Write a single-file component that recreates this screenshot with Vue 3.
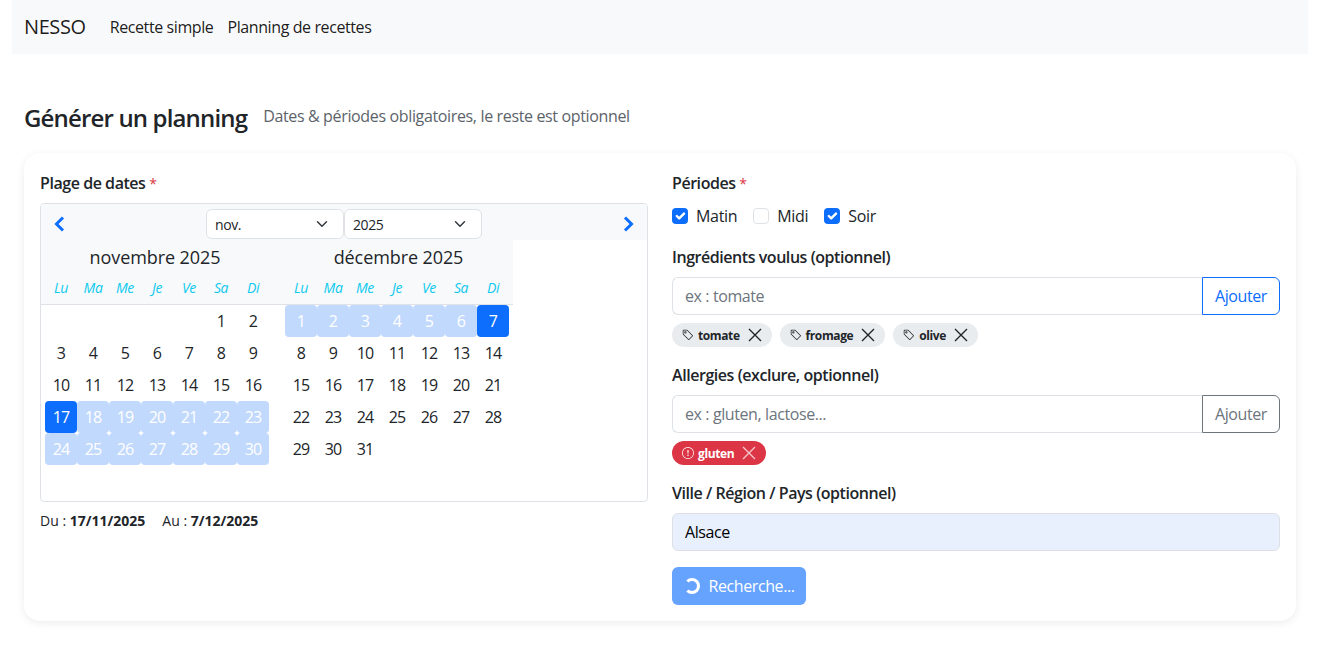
<script setup>
const weekDays = ['Lu', 'Ma', 'Me', 'Je', 'Ve', 'Sa', 'Di']

const range = (a, b) => Array.from({ length: b - a + 1 }, (_, i) => a + i)

// nov 2025 starts on a saturday, dec 2025 on a monday
const months = [
  { title: 'novembre 2025', blanks: 5, days: range(1, 30), start: 17, end: 31 },
  { title: 'décembre 2025', blanks: 0, days: range(1, 31), start: 0, end: 7 },
]

const dayClass = (m, d) => {
  if (d === m.start || d === m.end) return 'day picked'
  if (d > m.start && d < m.end) return 'day between'
  return 'day'
}

const tags = ['tomate', 'fromage', 'olive']
</script>

<template>
  <div class="page">
    <nav class="navbar">
      <span class="brand">NESSO</span>
      <a class="nav-link">Recette simple</a>
      <a class="nav-link">Planning de recettes</a>
    </nav>

    <div class="content">
      <div class="heading">
        <h1>Générer un planning</h1>
        <span class="sub">Dates &amp; périodes obligatoires, le reste est optionnel</span>
      </div>

      <div class="card">
        <div class="col">
          <div class="label">Plage de dates <span class="req">*</span></div>
          <div class="calendar">
            <div class="cal-top">
              <svg class="arrow" width="16" height="16" viewBox="0 0 16 16"><path d="M11 1.5 4.5 8l6.5 6.5" fill="none" stroke="#0d6efd" stroke-width="3"/></svg>
              <div class="selects">
                <div class="select">nov.<svg width="12" height="12" viewBox="0 0 16 16"><path d="m2 5 6 6 6-6" fill="none" stroke="#343a40" stroke-width="2" stroke-linecap="round" stroke-linejoin="round"/></svg></div>
                <div class="select">2025<svg width="12" height="12" viewBox="0 0 16 16"><path d="m2 5 6 6 6-6" fill="none" stroke="#343a40" stroke-width="2" stroke-linecap="round" stroke-linejoin="round"/></svg></div>
              </div>
              <svg class="arrow" width="16" height="16" viewBox="0 0 16 16"><path d="M5 1.5 11.5 8 5 14.5" fill="none" stroke="#0d6efd" stroke-width="3"/></svg>
            </div>
            <div class="months">
              <div v-for="m in months" :key="m.title" class="month">
                <div class="month-head">
                  <div class="month-title">{{ m.title }}</div>
                  <div class="grid week">
                    <span v-for="w in weekDays" :key="w">{{ w }}</span>
                  </div>
                </div>
                <div class="grid days">
                  <span v-for="b in m.blanks" :key="'b' + b"></span>
                  <span v-for="d in m.days" :key="d" :class="dayClass(m, d)">{{ d }}</span>
                </div>
              </div>
            </div>
          </div>
          <div class="picked-dates">
            <span>Du : <b>17/11/2025</b></span>
            <span>Au : <b>7/12/2025</b></span>
          </div>
        </div>

        <div class="col">
          <div class="label">Périodes <span class="req">*</span></div>
          <div class="checks">
            <label class="check">
              <span class="box on"><svg width="16" height="16" viewBox="0 0 20 20"><path d="m6 10 3 3 6-6" fill="none" stroke="#fff" stroke-width="3" stroke-linecap="round" stroke-linejoin="round"/></svg></span>Matin
            </label>
            <label class="check"><span class="box"></span>Midi</label>
            <label class="check">
              <span class="box on"><svg width="16" height="16" viewBox="0 0 20 20"><path d="m6 10 3 3 6-6" fill="none" stroke="#fff" stroke-width="3" stroke-linecap="round" stroke-linejoin="round"/></svg></span>Soir
            </label>
          </div>

          <div class="label">Ingrédients voulus (optionnel)</div>
          <div class="input-group">
            <input class="input" placeholder="ex : tomate" />
            <button class="add add-blue">Ajouter</button>
          </div>
          <div class="badges">
            <span v-for="t in tags" :key="t" class="badge">
              <svg width="12" height="12" viewBox="0 0 16 16" fill="#212529"><path d="M6 4.5a1.5 1.5 0 1 1-3 0 1.5 1.5 0 0 1 3 0m-1 0a.5.5 0 1 0-1 0 .5.5 0 0 0 1 0"/><path d="M2 1h4.586a1 1 0 0 1 .707.293l7 7a1 1 0 0 1 0 1.414l-4.586 4.586a1 1 0 0 1-1.414 0l-7-7A1 1 0 0 1 1 6.586V2a1 1 0 0 1 1-1m0 5.586 7 7L13.586 9l-7-7H2z"/></svg>
              <b>{{ t }}</b>
              <svg class="x" width="14" height="14" viewBox="0 0 14 14"><path d="m1 1 12 12M13 1 1 13" stroke="#212529" stroke-width="1.4" fill="none"/></svg>
            </span>
          </div>

          <div class="label">Allergies (exclure, optionnel)</div>
          <div class="input-group">
            <input class="input" placeholder="ex : gluten, lactose..." />
            <button class="add add-grey">Ajouter</button>
          </div>
          <div class="badges">
            <span class="badge badge-red">
              <svg width="12" height="12" viewBox="0 0 16 16" fill="#fff"><path d="M8 15A7 7 0 1 1 8 1a7 7 0 0 1 0 14m0 1A8 8 0 1 0 8 0a8 8 0 0 0 0 16"/><path d="M7.002 11a1 1 0 1 1 2 0 1 1 0 0 1-2 0M7.1 4.995a.905.905 0 1 1 1.8 0l-.35 3.507a.552.552 0 0 1-1.1 0z"/></svg>
              <b>gluten</b>
              <svg class="x" width="14" height="14" viewBox="0 0 14 14"><path d="m1 1 12 12M13 1 1 13" stroke="#f4c6cb" stroke-width="1.4" fill="none"/></svg>
            </span>
          </div>

          <div class="label">Ville / Région / Pays (optionnel)</div>
          <input class="input input-filled" value="Alsace" />

          <button class="search" disabled>
            <span class="spinner"></span>Recherche...
          </button>
        </div>
      </div>
    </div>
  </div>
</template>

<style>
body {
  background: #fff;
}
</style>

<style scoped>
.page {
  padding: 0 28px 0 12px;
  height: 657px;
  box-sizing: border-box;
  font-family: "Open Sans", "Noto Sans", sans-serif;
  font-size: 16px;
  letter-spacing: -0.025em;
  color: #212529;
  line-height: 1.5;
}
.navbar {
  height: 54px;
  background: #f8f9fa;
  padding: 0 12px;
  display: flex;
  align-items: center;
  color: rgba(0, 0, 0, 0.9);
}
.brand {
  font-size: 20px;
  margin-right: 24px;
}
.nav-link {
  margin-right: 14px;
  font-size: 16px;
}
.content {
  padding: 0 12px;
}
.heading {
  margin-top: 46px;
  height: 36px;
  display: flex;
  align-items: center;
  gap: 16px;
}
h1 {
  margin: 0;
  font-size: 24px;
  font-weight: 600;
  line-height: 36px;
  letter-spacing: -0.035em;
}
.sub {
  color: #5c636a;
  font-size: 16px;
  letter-spacing: -0.022em;
  padding-bottom: 4px;
}
.card {
  margin-top: 17px;
  height: 468px;
  box-sizing: border-box;
  padding: 18px 16px 16px;
  border-radius: 16px;
  background: #fff;
  box-shadow: 0 2px 8px rgba(0, 0, 0, 0.08);
  display: grid;
  grid-template-columns: 608px 608px;
  column-gap: 24px;
}
.col {
  display: flex;
  flex-direction: column;
  align-items: stretch;
}
.label {
  font-size: 16px;
  font-weight: 600;
  letter-spacing: -0.028em;
  line-height: 24px;
  height: 24px;
  margin-bottom: 8px;
}
.req {
  color: #dc3545;
  font-size: 14px;
  font-weight: 400;
}
.calendar {
  height: 299px;
  flex: none;
  box-sizing: border-box;
  border: 1px solid #dee2e6;
  border-radius: 4px;
  overflow: hidden;
}
.cal-top {
  height: 36px;
  box-sizing: border-box;
  background: #f8f9fa;
  display: flex;
  align-items: center;
  justify-content: space-between;
  padding: 5px 11px 1px;
}
.selects {
  display: flex;
}
.select {
  width: 138px;
  height: 30px;
  box-sizing: border-box;
  border: 1px solid #dee2e6;
  border-radius: 6px;
  background: #fff;
  font-size: 14px;
  display: flex;
  align-items: center;
  justify-content: space-between;
  padding: 0 15px 0 8px;
}
.months {
  display: grid;
  grid-template-columns: 224px 224px;
  column-gap: 16px;
  padding: 0 4px;
  width: 472px;
  box-sizing: border-box;
}
.month-head {
  height: 65px;
  margin: 0 -4px;
  padding: 0 4px;
  background: #f8f9fa;
  border-bottom: 1px solid #dee2e6;
  box-sizing: border-box;
}
.month:first-child .month-head {
  margin-right: -8px;
}
.month:last-child .month-head {
  margin-left: -8px;
  padding-left: 8px;
}
.month-title {
  font-size: 18px;
  letter-spacing: -0.005em;
  line-height: 34px;
  text-align: center;
}
.month:first-child .month-title {
  padding-right: 8px;
}
.month:last-child .month-title {
  padding-left: 3px;
}
.grid {
  display: grid;
  grid-template-columns: repeat(7, 32px);
}
.week span {
  font-size: 14px;
  font-style: italic;
  color: #0dcaf0;
  text-align: center;
  line-height: 28px;
}
.days span {
  height: 32px;
}
.day {
  display: flex;
  align-items: center;
  justify-content: center;
  font-size: 16px;
  letter-spacing: -0.05em;
  border-radius: 4px;
}
.between {
  background: #c2d9fe;
  color: #fff;
}
.picked {
  background: #0d6efd;
  color: #fff;
}
.picked-dates {
  margin-top: 8px;
  display: flex;
  gap: 17px;
  font-size: 14px;
  letter-spacing: 0;
  line-height: 21px;
}
.checks {
  display: flex;
  gap: 16px;
  height: 24px;
  margin-top: 1px;
  margin-bottom: 17px;
}
.check {
  display: flex;
  align-items: center;
  gap: 8px;
  font-size: 16px;
  letter-spacing: -0.02em;
}
.box {
  width: 16px;
  height: 16px;
  box-sizing: border-box;
  border: 1px solid #dee2e6;
  border-radius: 4px;
  background: #fff;
}
.box.on {
  background: #0d6efd;
  border: 0;
}
.box svg {
  display: block;
}
.input-group {
  display: flex;
  height: 38px;
  flex: none;
}
.input {
  flex: 1;
  min-width: 0;
  height: 38px;
  box-sizing: border-box;
  border: 1px solid #dee2e6;
  border-right: 0;
  border-radius: 6px 0 0 6px;
  padding: 0 12px;
  font: inherit;
  font-size: 16px;
  letter-spacing: inherit;
  color: #212529;
  outline: none;
}
.input::placeholder {
  color: #6c757d;
  opacity: 1;
}
.input-filled {
  flex: none;
  width: 100%;
  border: 1px solid #dee2e6;
  border-radius: 6px;
  background: #e8f0fe;
  color: #000;
}
.add {
  width: 78px;
  box-sizing: border-box;
  background: #fff;
  font: inherit;
  font-size: 16px;
  letter-spacing: inherit;
  border-radius: 0 6px 6px 0;
  padding: 0;
}
.add-blue {
  border: 1px solid #0d6efd;
  color: #0d6efd;
}
.add-grey {
  border: 1px solid #6c757d;
  color: #6c757d;
}
.badges {
  display: flex;
  gap: 8px;
  margin-top: 8px;
  height: 24px;
  margin-bottom: 16px;
}
.badge {
  display: inline-flex;
  align-items: center;
  gap: 4px;
  height: 24px;
  padding: 0 10px;
  border-radius: 12px;
  background: #e9ecef;
  font-size: 12px;
}
.badge b {
  padding-top: 2px;
}
.badge .x {
  margin-left: 4px;
}
.badge-red {
  background: #dc3545;
  color: #fff;
}
.search {
  margin-top: 16px;
  align-self: flex-start;
  width: 134px;
  height: 38px;
  border: 0;
  border-radius: 6px;
  background: #66a3ff;
  color: #fff;
  font: inherit;
  font-size: 16px;
  letter-spacing: inherit;
  display: flex;
  align-items: center;
  justify-content: center;
  gap: 8px;
  padding: 0 0 0 1px;
}
.spinner {
  width: 16px;
  height: 16px;
  box-sizing: border-box;
  border: 3px solid #fff;
  border-left-color: transparent;
  border-radius: 50%;
}
</style>
